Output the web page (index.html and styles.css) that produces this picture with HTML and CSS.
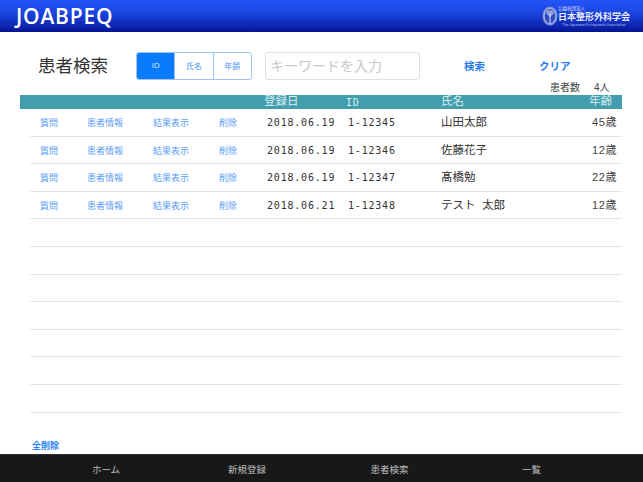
FILE: index.html
```html
<!DOCTYPE html>
<html lang="ja">
<head>
<meta charset="utf-8">
<title>患者検索</title>
<link rel="stylesheet" href="styles.css">
</head>
<body>
<div class="page">
  <header class="topbar">
    <div class="brand">JOABPEQ</div>
    <div class="assoc">
      <svg class="emblem" width="16" height="20" viewBox="0 0 17 21" aria-hidden="true">
        <ellipse cx="8.5" cy="10.5" rx="8" ry="10" fill="#7f93d8"/>
        <ellipse cx="8.5" cy="10.5" rx="6.2" ry="8.2" fill="#2f4cc0" stroke="#c6d0f0" stroke-width=".8"/>
        <path d="M8.5 18V8M8.5 11L5 7M8.5 11L12 7M8.5 9L6.5 5M8.5 9L10.5 5" stroke="#dfe5fa" stroke-width="1" fill="none"/>
        <ellipse cx="8.5" cy="6.5" rx="4.6" ry="3" fill="#9fb0e6" opacity=".6"/>
      </svg>
      <div class="assoc-text">
        <div class="assoc-small">公益社団法人</div>
        <div class="assoc-name">日本整形外科学会</div>
        <div class="assoc-en">The Japanese Orthopaedic Association</div>
      </div>
    </div>
  </header>

  <section class="search">
    <h1 class="title">患者検索</h1>
    <div class="segments">
      <div class="segment active">ID</div>
      <div class="segment">氏名</div>
      <div class="segment">年齢</div>
    </div>
    <div class="keyword">キーワードを入力</div>
    <div class="action action-search">検索</div>
    <div class="action action-clear">クリア</div>
  </section>

  <div class="count"><span>患者数</span><span class="count-num">4人</span></div>

  <div class="thead">
    <span class="th-date">登録日</span>
    <span class="th-id">ID</span>
    <span class="th-name">氏名</span>
    <span class="th-age">年齢</span>
  </div>

  <div class="rows">
    <div class="row">
      <a class="link c1">質問</a><a class="link c2">患者情報</a><a class="link c3">結果表示</a><a class="link c4">削除</a>
      <span class="mono date">2018.06.19</span><span class="mono pid">1-12345</span><span class="name">山田太郎</span><span class="age">45歳</span>
    </div>
    <div class="row">
      <a class="link c1">質問</a><a class="link c2">患者情報</a><a class="link c3">結果表示</a><a class="link c4">削除</a>
      <span class="mono date">2018.06.19</span><span class="mono pid">1-12346</span><span class="name">佐藤花子</span><span class="age">12歳</span>
    </div>
    <div class="row">
      <a class="link c1">質問</a><a class="link c2">患者情報</a><a class="link c3">結果表示</a><a class="link c4">削除</a>
      <span class="mono date">2018.06.19</span><span class="mono pid">1-12347</span><span class="name">髙橋勉</span><span class="age">22歳</span>
    </div>
    <div class="row">
      <a class="link c1">質問</a><a class="link c2">患者情報</a><a class="link c3">結果表示</a><a class="link c4">削除</a>
      <span class="mono date">2018.06.21</span><span class="mono pid">1-12348</span><span class="name">テスト&nbsp;&nbsp;太郎</span><span class="age">12歳</span>
    </div>
    <div class="row"></div>
    <div class="row"></div>
    <div class="row"></div>
    <div class="row"></div>
    <div class="row"></div>
    <div class="row"></div>
    <div class="row"></div>
  </div>

  <div class="delete-all">全削除</div>

  <nav class="tabbar">
    <span>ホーム</span>
    <span>新規登録</span>
    <span>患者検索</span>
    <span>一覧</span>
  </nav>
</div>
</body>
</html>
```

FILE: styles.css
```css
* { box-sizing: border-box; }
html, body { margin: 0; padding: 0; background: #fff; }
body { font-family: "Liberation Sans", "Noto Sans CJK JP", sans-serif; color: #333; }
.page { width: 643px; height: 482px; overflow: hidden; display: flex; flex-direction: column; }

.topbar {
  height: 32px; flex: none;
  background: linear-gradient(#2454fa 0%, #1c45e0 40%, #0a1fa6 90%, #00128c 100%);
  display: flex; align-items: center; justify-content: space-between;
  padding: 0 13px 0 16px;
}
.brand { font-family: "Open Sans", sans-serif; font-size: 21px; font-weight: 600; letter-spacing: .8px; color: #fff; line-height: 32px; }
.assoc { display: flex; align-items: center; }
.assoc-text { display: flex; flex-direction: column; color: #e8ecfb; font-family: "Noto Sans CJK JP", serif; }
.assoc-small { font-size: 4.5px; line-height: 6px; }
.assoc-name { font-size: 9px; line-height: 11px; font-weight: 700; white-space: nowrap; }
.assoc-en { font-size: 3.5px; line-height: 5px; text-align: center; color: #b6c2ee; white-space: nowrap; }

.search { height: 47px; flex: none; margin-top: 10px; display: flex; align-items: center; }
.title { margin: 0 0 0 38px; width: 98px; font-size: 17.5px; font-weight: 400; color: #333; line-height: 30px; }
.segments { display: flex; width: 116px; height: 28px; border: 1px solid #9cc4fb; border-radius: 3px; overflow: hidden; }
.segment { flex: 1; display: flex; align-items: center; justify-content: center; font-size: 8px; color: #4b94fa; border-left: 1px solid #9cc4fb; }
.segment:first-child { border-left: 0; }
.segment.active { background: #0a7cfb; color: #d5e7fe; }
.keyword { margin-left: 13px; width: 155px; height: 28px; border: 1px solid #e0e0e0; border-radius: 3px; padding-left: 4px; font-size: 14px; line-height: 26px; color: #c8c8c8; white-space: nowrap; }
.action { font-size: 10.5px; font-weight: 700; color: #2a7df0; }
.action-search { margin-left: 44px; }
.action-clear { margin-left: 54px; }

.count { height: 0; flex: none; position: relative; font-size: 10px; color: #444; }
.count span { position: absolute; top: -8px; left: 550px; line-height: 14px; }
.count .count-num { left: 594px; }

.thead { height: 14px; margin: 6px 21px 0 20px; flex: none; background: #429eac; position: relative; color: #d8eef1; font-size: 11.5px; line-height: 13px; }
.thead span { position: absolute; top: 0; }
.thead .th-id { left: 326px; top: 1px; font-family: "DejaVu Sans Mono", monospace; font-size: 10px; letter-spacing: .8px; }
.th-date { left: 244px; }
.th-name { left: 421px; }
.th-age { left: 569px; }

.rows { margin: 0 21px 0 30px; flex: none; }
.row { height: 27.6px; border-bottom: 1.5px solid #e4e4e4; position: relative; font-size: 9px; }
.row > * { position: absolute; line-height: 27px; top: 0; white-space: nowrap; }
.row .link { color: #5a9df5; line-height: 28px; }
.c1 { left: 10px; }
.c2 { left: 57px; }
.c3 { left: 123px; }
.c4 { left: 189px; }
.mono { font-family: "DejaVu Sans Mono", monospace; font-size: 10px; letter-spacing: .8px; color: #333; }
.date { left: 237px; }
.pid { left: 318px; }
.row .name { left: 411px; font-size: 11.5px; color: #333; line-height: 26px; }
.row .age { right: 5px; font-size: 11px; letter-spacing: .6px; color: #444; line-height: 26px; }

.delete-all { margin: 26px 0 0 32px; flex: none; font-size: 9px; font-weight: 700; color: #2a82f5; line-height: 14px; }

.tabbar {
  margin-top: auto; height: 28px; flex: none; background: #181818; border-top: 1px solid #2e2e2e;
  display: grid; grid-template-columns: 142px 140px 145px 139px;
  padding-left: 35px; align-items: center; color: #bdbdbd; font-size: 9.5px;
}
.tabbar span { text-align: center; white-space: nowrap; }
```
